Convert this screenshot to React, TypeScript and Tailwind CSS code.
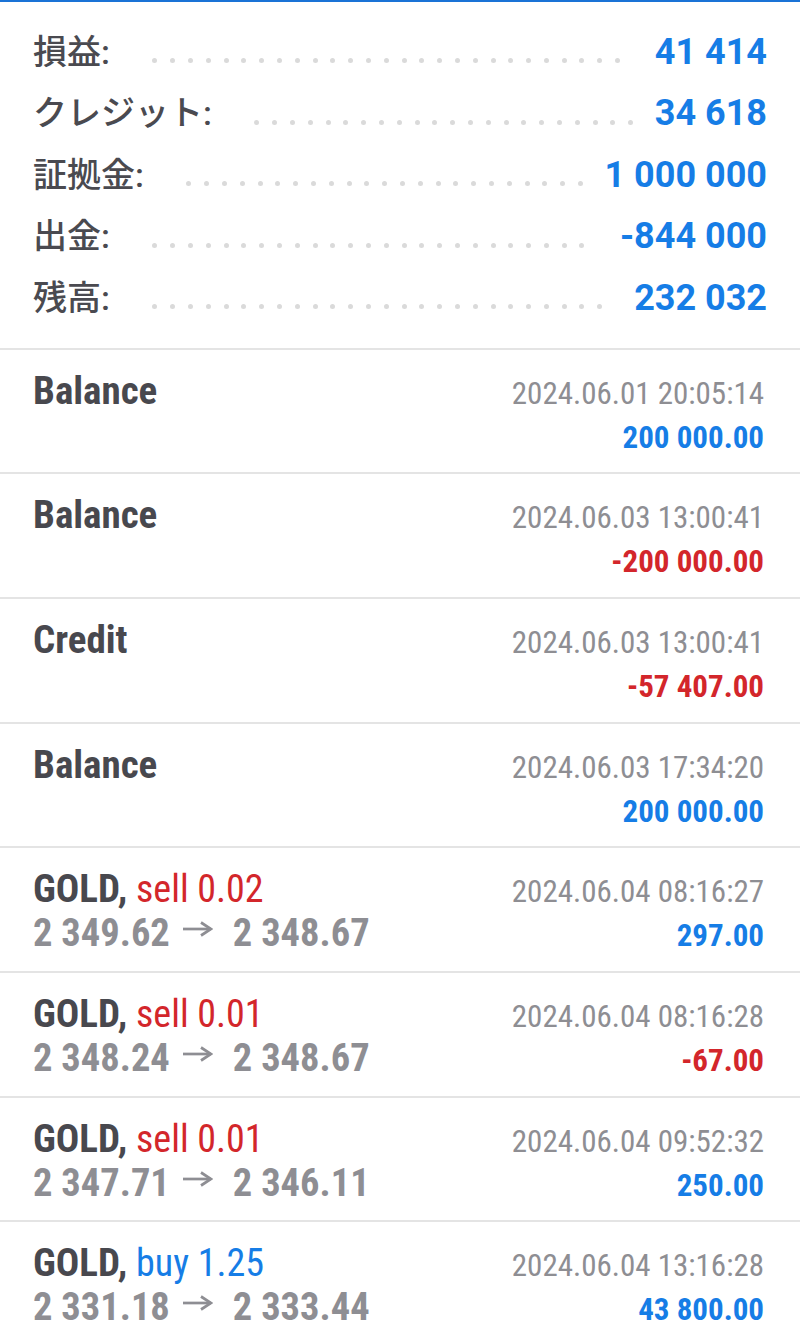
import React from "react";

const summary = [
  { label: "損益:", value: "41 414" },
  { label: "クレジット:", value: "34 618" },
  { label: "証拠金:", value: "1 000 000" },
  { label: "出金:", value: "-844 000" },
  { label: "残高:", value: "232 032" },
];

type Row = {
  title: string;
  side?: string;
  sideColor?: "red" | "blue";
  from?: string;
  to?: string;
  date: string;
  amount: string;
  amountColor: "red" | "blue";
};

const rows: Row[] = [
  { title: "Balance", date: "2024.06.01 20:05:14", amount: "200 000.00", amountColor: "blue" },
  { title: "Balance", date: "2024.06.03 13:00:41", amount: "-200 000.00", amountColor: "red" },
  { title: "Credit", date: "2024.06.03 13:00:41", amount: "-57 407.00", amountColor: "red" },
  { title: "Balance", date: "2024.06.03 17:34:20", amount: "200 000.00", amountColor: "blue" },
  { title: "GOLD,", side: "sell 0.02", sideColor: "red", from: "2 349.62", to: "2 348.67", date: "2024.06.04 08:16:27", amount: "297.00", amountColor: "blue" },
  { title: "GOLD,", side: "sell 0.01", sideColor: "red", from: "2 348.24", to: "2 348.67", date: "2024.06.04 08:16:28", amount: "-67.00", amountColor: "red" },
  { title: "GOLD,", side: "sell 0.01", sideColor: "red", from: "2 347.71", to: "2 346.11", date: "2024.06.04 09:52:32", amount: "250.00", amountColor: "blue" },
  { title: "GOLD,", side: "buy 1.25", sideColor: "blue", from: "2 331.18", to: "2 333.44", date: "2024.06.04 13:16:28", amount: "43 800.00", amountColor: "blue" },
];

const dots = Array.from({ length: 40 });

function Arrow() {
  return (
    <svg
      className="inline-block ml-[13px] mr-[20px] align-[7px]"
      width="30"
      height="20"
      viewBox="0 0 30 20"
      fill="none"
      stroke="#8e8e93"
      strokeWidth="2.7"
      strokeLinecap="butt"
      strokeLinejoin="miter"
    >
      <path d="M0 10 H28" />
      <path d="M18 3.5 L28 10 L18 16.5" />
    </svg>
  );
}

export default function App() {
  return (
    <div className="w-[800px] bg-white">
      <div className="border-t-2 border-[#1a73d6] pt-[19px] pb-[19px] pl-[33px] pr-[33px]">
        {summary.map((s) => (
          <div key={s.label} className="flex h-[61.5px] items-center">
            <span className="font-['Roboto','Noto_Sans_CJK_JP',sans-serif] text-[34px] leading-none font-medium text-[#4a4a50] whitespace-nowrap">
              {s.label}
            </span>
            <div className="ml-[36px] mr-[12px] mt-[18px] flex h-[5px] flex-1 flex-wrap overflow-hidden">
              {dots.map((_, i) => (
                <span key={i} className="flex h-[5px] w-[17.8px] flex-none justify-center">
                  <span className="h-[5px] w-[5px] rounded-full bg-[#dadada]" />
                </span>
              ))}
            </div>
            <span className="font-['Roboto',sans-serif] text-[36px] leading-none font-bold text-[#167de6] whitespace-nowrap">
              {s.value}
            </span>
          </div>
        ))}
      </div>
      {rows.map((r, i) => (
        <div
          key={i}
          className="h-[124.7px] border-t-2 border-[#e4e4e4] pt-[21px] pl-[33px] pr-[36px] font-['Roboto_Condensed','Roboto',sans-serif]"
        >
          <div className="grid grid-cols-[1fr_auto] items-baseline leading-[41px]">
            <div className="text-[39px] font-bold text-[#48484e] whitespace-nowrap">
              {r.title}
              {r.side && (
                <span
                  className={`text-[38px] font-normal ${
                    r.sideColor === "red" ? "text-[#d3262b]" : "text-[#167de6]"
                  }`}
                >
                  {" "}
                  {r.side}
                </span>
              )}
            </div>
            <div className="text-right text-[31px] text-[#8e8e93] whitespace-nowrap">{r.date}</div>
            <div className="text-[38.5px] font-bold text-[#8e8e93] whitespace-nowrap">
              {r.from ? (
                <>
                  {r.from}
                  <Arrow />
                  {r.to}
                </>
              ) : (
                "\u00a0"
              )}
            </div>
            <div
              className={`text-right text-[31px] font-bold whitespace-nowrap ${
                r.amountColor === "red" ? "text-[#d3262b]" : "text-[#167de6]"
              }`}
            >
              {r.amount}
            </div>
          </div>
        </div>
      ))}
    </div>
  );
}
